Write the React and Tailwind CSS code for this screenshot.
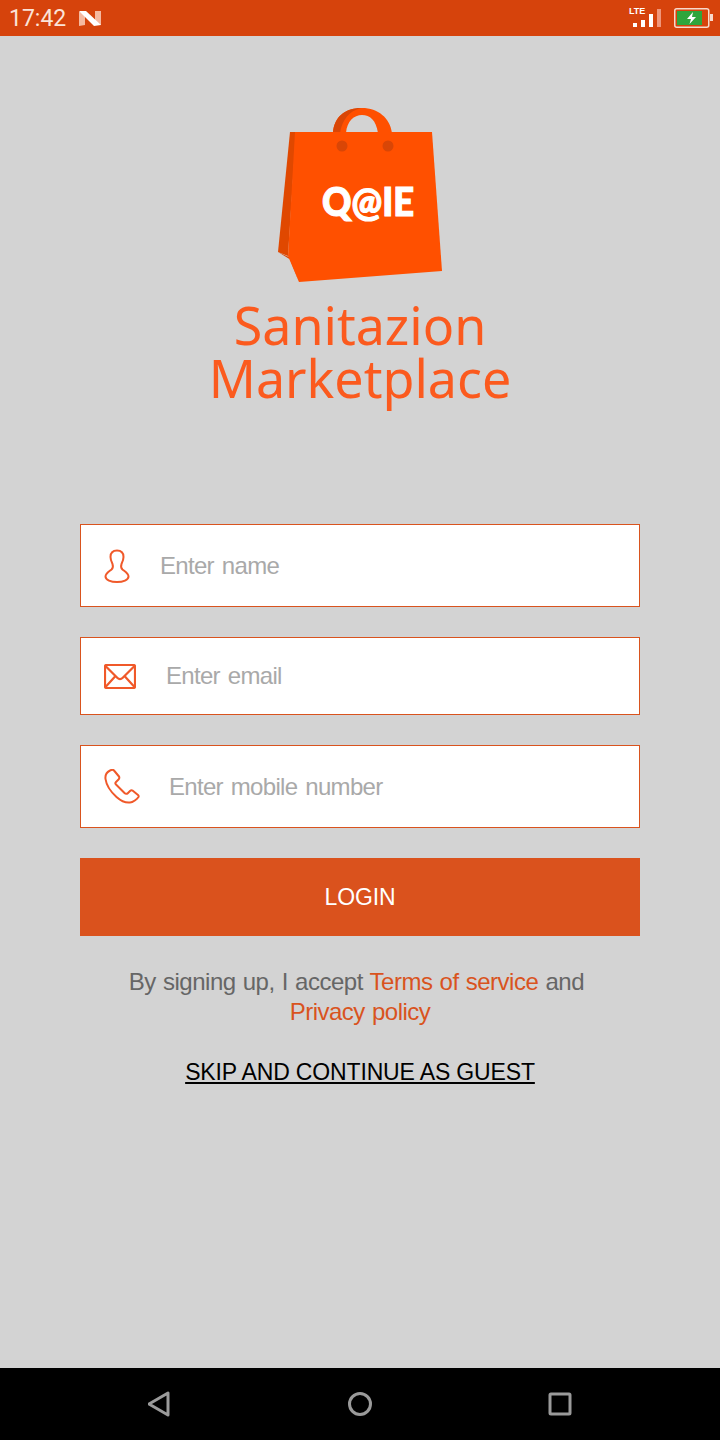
import React from "react";

const body = { fontFamily: '"Liberation Sans", Arial, sans-serif' };

function BagLogo() {
  return (
    <svg viewBox="278 108 166 175" className="ml-[2px] block h-[175px] w-[166px]">
      <path d="M333 133 C334 116 346 108 362 108 C378 108 390 118 392 133 L378 133 C376 120 370 115 362 115 C354 115 347 121 346 133 Z" fill="#ff5000" />
      <path d="M333 133 C334 118 344 108 361 108 C349 111 342 120 340 133 Z" fill="#d94606" />
      <path d="M290 132 L296 132 L288 256 L278 252 Z" fill="#e04800" />
      <path d="M278 252 L289 257 L299 282 L291 260 Z" fill="#d94606" />
      <path d="M295 132 L432 132 L442 271 L299 282 L288 256 Z" fill="#ff5000" />
      <circle cx="342" cy="146" r="5.5" fill="#d94606" />
      <circle cx="388" cy="146" r="5.5" fill="#d94606" />
      <text
        x="322"
        y="216"
        fill="#ffffff"
        stroke="#ffffff"
        strokeWidth="1.2"
        textLength="92"
        lengthAdjust="spacingAndGlyphs"
        style={{ fontFamily: "Lato, sans-serif", fontWeight: 900, fontSize: 40 }}
      >
        Q@IE
      </text>
    </svg>
  );
}

function UserIcon() {
  return (
    <svg width="26" height="34" viewBox="0 0 26 34" fill="none" stroke="#f0592a" strokeWidth="2">
      <path d="M13 1.5 C9 1.5 6.5 4 6.5 8 C6.5 11 7.5 13 8.5 15 C9.2 17 9 19 7.5 20.5 C5 22.5 1.5 24.5 1.5 27.5 C1.5 31 7 33 13 33 C19 33 24.5 31 24.5 27.5 C24.5 24.5 21 22.5 18.5 20.5 C17 19 16.8 17 17.5 15 C18.5 13 19.5 11 19.5 8 C19.5 4 17 1.5 13 1.5 Z" />
    </svg>
  );
}

function MailIcon() {
  return (
    <svg width="32" height="25" viewBox="0 0 32 25" fill="none" stroke="#f0592a" strokeWidth="2.2" strokeLinejoin="round">
      <rect x="1" y="1" width="30" height="23" rx="1.5" />
      <path d="M1.5 2 L13.5 14 C15 15.5 17 15.5 18.5 14 L30.5 2" />
      <path d="M1.5 23 L11.5 12 M30.5 23 L20.5 12" />
    </svg>
  );
}

function PhoneIcon() {
  return (
    <svg width="36" height="35" viewBox="0 0 36 35" fill="none" stroke="#f0592a" strokeWidth="2" strokeLinejoin="round">
      <path d="M6 1.5 C3 3 1 6 1.5 10 C2.5 17 7 23 12.5 28 C17 32 22 34 26 33.5 C29 33.5 33 30 34.5 28 C35 27 34.5 26.5 34 26 L28.5 21.5 C27.5 20.8 27 21 26 22 L23.5 24.5 C22.5 25 21.5 25 20.5 24 L12 15.5 C11 14.5 11.5 13.5 12 13 L14.5 10.5 C15.5 9.5 15.5 8.5 15 7.5 L10 1.5 C9 0.5 7.5 0.7 6 1.5 Z" />
    </svg>
  );
}

function Field({ h, icon, placeholder, gap }) {
  return (
    <div className={`flex items-center border border-[#d9531e] bg-white pl-[23px] ${h}`}>
      <span className={`flex shrink-0 ${gap}`}>{icon}</span>
      <input
        placeholder={placeholder}
        className="min-w-0 flex-1 bg-transparent text-[24px] tracking-[-0.7px] [word-spacing:2px] text-[#444] outline-none placeholder:text-[#a9a9a9]"
      />
    </div>
  );
}

function StatusBar() {
  return (
    <div className="flex h-9 shrink-0 items-center justify-between bg-[#d6430c] pl-[9px] pr-[7px]">
      <div className="flex items-center gap-[12px]">
        <span className="text-[23px] leading-none text-[#fbe3d8]" style={{ fontFamily: "Roboto, sans-serif" }}>
          17:42
        </span>
        <svg width="24" height="17" viewBox="0 0 24 17">
          <path d="M1 2 L7 1 L7 15 L1 16 Z" fill="#f5b9a0" />
          <path d="M17 1 L23 1 L23 15 L17 15 Z" fill="#f5b9a0" />
          <path d="M1 1 L8 1 L23 15 L16 16 Z" fill="#ffffff" />
        </svg>
      </div>
      <div className="flex items-center gap-[13px]">
        <div className="relative h-[24px] w-[32px]">
          <span className="absolute left-0 top-[1px] text-[9px] font-bold leading-none text-white">LTE</span>
          <svg width="32" height="24" viewBox="0 0 32 24" className="absolute left-0 top-0">
            <rect x="4" y="17" width="4" height="4" fill="#fff" />
            <rect x="12" y="14" width="4" height="7" fill="#fff" />
            <rect x="20" y="8" width="4" height="13" fill="#fff" />
            <rect x="28" y="3" width="4" height="18" fill="#f0967a" />
          </svg>
        </div>
        <svg width="39" height="20" viewBox="0 0 39 20">
          <rect x="0.75" y="0.75" width="34" height="18.5" rx="2" fill="none" stroke="#f8d9cc" strokeWidth="1.5" />
          <rect x="3" y="3" width="25" height="14" fill="#2fa53c" />
          <rect x="36" y="6" width="3" height="7" fill="#f8d9cc" />
          <path d="M19 4 L13 11 L17 11 L15.5 16 L22 9 L18 9 Z" fill="#fff" />
        </svg>
      </div>
    </div>
  );
}

function NavBar() {
  return (
    <div className="grid h-[72px] shrink-0 grid-cols-3 items-center bg-black px-[60px]">
      <svg width="24" height="26" viewBox="0 0 24 26" className="justify-self-center" fill="none" stroke="#9a9a9a" strokeWidth="3" strokeLinejoin="round">
        <path d="M20 2 L20 24 L1 13 Z" />
      </svg>
      <svg width="26" height="26" viewBox="0 0 26 26" className="justify-self-center" fill="none" stroke="#9a9a9a" strokeWidth="3">
        <circle cx="13" cy="13" r="10.5" />
      </svg>
      <svg width="24" height="24" viewBox="0 0 24 24" className="justify-self-center" fill="none" stroke="#9a9a9a" strokeWidth="3" strokeLinejoin="round">
        <rect x="2" y="2" width="20" height="20" rx="1" />
      </svg>
    </div>
  );
}

export default function App() {
  return (
    <div className="flex h-[1440px] w-[720px] flex-col bg-[#d3d3d3]" style={body}>
      <StatusBar />

      <main className="flex flex-1 flex-col items-center pt-[72px]">
        <BagLogo />
        <h1 className="mt-[15px] text-center text-[52px] leading-[53px] text-[#fb5a1e]" style={{ fontFamily: '"Noto Sans", sans-serif' }}>
          Sanitazion
          <br />
          Marketplace
        </h1>

        <div className="mt-[120px] flex w-[560px] flex-col gap-[30px]">
          <Field h="h-[83px]" gap="mr-[30px]" icon={<UserIcon />} placeholder="Enter name" />
          <Field h="h-[78px]" gap="mr-[30px]" icon={<MailIcon />} placeholder="Enter email" />
          <Field h="h-[83px]" gap="mr-[29px]" icon={<PhoneIcon />} placeholder="Enter mobile number" />
          <button className="h-[78px] bg-[#da521d] text-[23px] tracking-[-0.1px] text-white">LOGIN</button>
        </div>

        <p className="mt-[31px] w-[560px] text-center text-[24px] leading-[30px] tracking-[-0.5px] [word-spacing:1px] text-[#666666]">
          By signing up, I accept <span className="text-[#d9531e]">Terms of service</span> and&nbsp;
          <br />
          <span className="text-[#d9531e]">Privacy policy</span>
        </p>
        <a className="mt-[30px] text-[23px] leading-[30px] tracking-[-0.15px] text-black underline">SKIP AND CONTINUE AS GUEST</a>
      </main>

      <NavBar />
    </div>
  );
}
